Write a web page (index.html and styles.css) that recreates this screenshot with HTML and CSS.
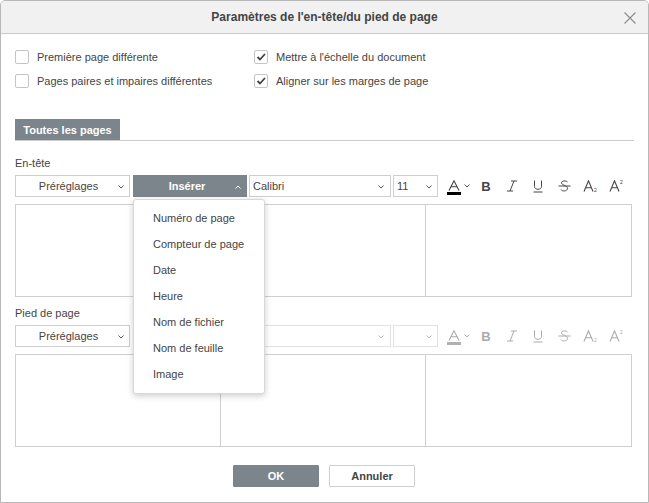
FILE: index.html
```html
<!DOCTYPE html>
<html lang="fr">
<head>
<meta charset="utf-8">
<title>Paramètres de l'en-tête/du pied de page</title>
<link rel="stylesheet" href="styles.css">
</head>
<body>
<div class="dialog">
  <div class="header">
    <span class="title">Paramètres de l'en-tête/du pied de page</span>
    <span class="close"><svg width="12" height="12" viewBox="0 0 12 12"><path d="M0.5 0.5 L11.5 11.5 M11.5 0.5 L0.5 11.5" stroke="#8c8c8c" stroke-width="1.1" fill="none"/></svg></span>
  </div>
  <div class="body">
    <div class="options">
      <label class="opt"><span class="cb"></span>Première page différente</label>
      <label class="opt"><span class="cb checked"><svg width="12" height="12" viewBox="0 0 12 12"><path d="M2.5 6 L5 8.5 L10 3" stroke="#444" stroke-width="1.8" fill="none"/></svg></span>Mettre à l'échelle du document</label>
      <label class="opt"><span class="cb"></span>Pages paires et impaires différentes</label>
      <label class="opt"><span class="cb checked"><svg width="12" height="12" viewBox="0 0 12 12"><path d="M2.5 6 L5 8.5 L10 3" stroke="#444" stroke-width="1.8" fill="none"/></svg></span>Aligner sur les marges de page</label>
    </div>

    <div class="tabs"><span class="tab">Toutes les pages</span></div>

    <div class="section-label">En-tête</div>
    <div class="toolbar">
      <div class="combo presets"><span class="ctext">Préréglages</span><svg class="caret" width="6" height="4" viewBox="0 0 6 4"><path d="M0.5 0.5 L3 3 L5.5 0.5" stroke="#555" fill="none"/></svg></div>
      <div class="insert-wrap">
        <div class="combo insert"><span class="ctext">Insérer</span><svg class="caret" width="6" height="4" viewBox="0 0 6 4"><path d="M0.5 3.5 L3 1 L5.5 3.5" stroke="#fff" fill="none"/></svg></div>
        <ul class="menu">
          <li>Numéro de page</li>
          <li>Compteur de page</li>
          <li>Date</li>
          <li>Heure</li>
          <li>Nom de fichier</li>
          <li>Nom de feuille</li>
          <li>Image</li>
        </ul>
      </div>
      <div class="combo font"><span class="ctext left">Calibri</span><svg class="caret" width="6" height="4" viewBox="0 0 6 4"><path d="M0.5 0.5 L3 3 L5.5 0.5" stroke="#555" fill="none"/></svg></div>
      <div class="combo size"><span class="ctext left">11</span><svg class="caret" width="6" height="4" viewBox="0 0 6 4"><path d="M0.5 0.5 L3 3 L5.5 0.5" stroke="#555" fill="none"/></svg></div>
      <div class="icons">
        <div class="ib fcolor">
          <span class="fa"><svg width="12" height="11" viewBox="0 0 12 11"><path d="M1 10.5 L6 0.8 L11 10.5 M3 6.8 H9" stroke="#444" stroke-width="1.1" fill="none"/></svg><span class="bar"></span></span>
          <svg class="caret" width="6" height="4" viewBox="0 0 6 4"><path d="M0.5 0.5 L3 3 L5.5 0.5" stroke="#555" fill="none"/></svg>
        </div>
        <div class="ib"><span class="bold">B</span></div>
        <div class="ib"><svg width="12" height="12" viewBox="0 0 12 12"><path d="M5 1 H11 M1 11 H7 M8 1 L4 11" stroke="#444" stroke-width="1" fill="none"/></svg></div>
        <div class="ib"><svg width="12" height="13" viewBox="0 0 12 13"><path d="M2.5 0.5 V6.5 C2.5 10.2 9.5 10.2 9.5 6.5 V0.5 M1.5 12 H10.5" stroke="#444" stroke-width="1" fill="none"/></svg></div>
        <div class="ib"><svg width="13" height="12" viewBox="0 0 13 12"><path d="M9.5 2 C8.5 0.5 3.5 0.4 3.5 3 C3.5 5 9.5 5.4 9.5 8.3 C9.5 11.5 4 11.6 3 9.6 M0.5 6 H12.5" stroke="#444" stroke-width="1" fill="none"/></svg></div>
        <div class="ib"><svg width="15" height="12" viewBox="0 0 15 12"><path d="M1 11.5 L5.5 0.8 L10 11.5 M2.7 7.8 H8.3" stroke="#444" stroke-width="1.1" fill="none"/><text x="11" y="11.5" font-size="5" font-family="Liberation Sans, Arial, sans-serif" fill="#444">2</text></svg></div>
        <div class="ib"><svg width="15" height="12" viewBox="0 0 15 12"><path d="M1 11.5 L5.5 0.8 L10 11.5 M2.7 7.8 H8.3" stroke="#444" stroke-width="1.1" fill="none"/><text x="11" y="4" font-size="5" font-family="Liberation Sans, Arial, sans-serif" fill="#444">2</text></svg></div>
      </div>
    </div>
    <div class="editor"><div class="pane"></div><div class="pane"></div><div class="pane"></div></div>

    <div class="section-label second">Pied de page</div>
    <div class="toolbar">
      <div class="combo presets"><span class="ctext">Préréglages</span><svg class="caret" width="6" height="4" viewBox="0 0 6 4"><path d="M0.5 0.5 L3 3 L5.5 0.5" stroke="#555" fill="none"/></svg></div>
      <div class="insert-wrap">
        <div class="combo insert"><span class="ctext">Insérer</span><svg class="caret" width="6" height="4" viewBox="0 0 6 4"><path d="M0.5 0.5 L3 3 L5.5 0.5" stroke="#fff" fill="none"/></svg></div>
      </div>
      <div class="combo font disabled"><span class="ctext left"></span><svg class="caret" width="6" height="4" viewBox="0 0 6 4"><path d="M0.5 0.5 L3 3 L5.5 0.5" stroke="#bbb" fill="none"/></svg></div>
      <div class="combo size disabled"><span class="ctext left"></span><svg class="caret" width="6" height="4" viewBox="0 0 6 4"><path d="M0.5 0.5 L3 3 L5.5 0.5" stroke="#bbb" fill="none"/></svg></div>
      <div class="icons dim">
        <div class="ib fcolor">
          <span class="fa"><svg width="12" height="11" viewBox="0 0 12 11"><path d="M1 10.5 L6 0.8 L11 10.5 M3 6.8 H9" stroke="#444" stroke-width="1.1" fill="none"/></svg><span class="bar gray"></span></span>
          <svg class="caret" width="6" height="4" viewBox="0 0 6 4"><path d="M0.5 0.5 L3 3 L5.5 0.5" stroke="#555" fill="none"/></svg>
        </div>
        <div class="ib"><span class="bold">B</span></div>
        <div class="ib"><svg width="12" height="12" viewBox="0 0 12 12"><path d="M5 1 H11 M1 11 H7 M8 1 L4 11" stroke="#444" stroke-width="1" fill="none"/></svg></div>
        <div class="ib"><svg width="12" height="13" viewBox="0 0 12 13"><path d="M2.5 0.5 V6.5 C2.5 10.2 9.5 10.2 9.5 6.5 V0.5 M1.5 12 H10.5" stroke="#444" stroke-width="1" fill="none"/></svg></div>
        <div class="ib"><svg width="13" height="12" viewBox="0 0 13 12"><path d="M9.5 2 C8.5 0.5 3.5 0.4 3.5 3 C3.5 5 9.5 5.4 9.5 8.3 C9.5 11.5 4 11.6 3 9.6 M0.5 6 H12.5" stroke="#444" stroke-width="1" fill="none"/></svg></div>
        <div class="ib"><svg width="15" height="12" viewBox="0 0 15 12"><path d="M1 11.5 L5.5 0.8 L10 11.5 M2.7 7.8 H8.3" stroke="#444" stroke-width="1.1" fill="none"/><text x="11" y="11.5" font-size="5" font-family="Liberation Sans, Arial, sans-serif" fill="#444">2</text></svg></div>
        <div class="ib"><svg width="15" height="12" viewBox="0 0 15 12"><path d="M1 11.5 L5.5 0.8 L10 11.5 M2.7 7.8 H8.3" stroke="#444" stroke-width="1.1" fill="none"/><text x="11" y="4" font-size="5" font-family="Liberation Sans, Arial, sans-serif" fill="#444">2</text></svg></div>
      </div>
    </div>
    <div class="editor"><div class="pane"></div><div class="pane"></div><div class="pane"></div></div>
  </div>
  <div class="footer">
    <button class="btn primary">OK</button>
    <button class="btn">Annuler</button>
  </div>
</div>
</body>
</html>
```

FILE: styles.css
```css
* { box-sizing: border-box; }
html, body { margin: 0; padding: 0; background: #fff; }
body {
  font-family: "Liberation Sans", Arial, sans-serif;
  font-size: 11px;
  color: #444;
}
.dialog {
  width: 649px;
  height: 503px;
  border: 1px solid #b8b8b8;
  border-radius: 5px 5px 0 0;
  background: #fff;
  position: relative;
  overflow: hidden;
}
.header {
  height: 33px;
  background: #f1f1f1;
  border-bottom: 1px solid #cbcbcb;
  display: flex;
  align-items: center;
  justify-content: center;
  position: relative;
}
.title {
  font-weight: bold;
  font-size: 12px;
  color: #444;
}
.close {
  position: absolute;
  right: 12px;
  top: 11px;
  width: 12px;
  height: 12px;
  display: flex;
}
.body {
  padding: 16px 14px 0 14px;
}
.options {
  display: grid;
  grid-template-columns: 239px 1fr;
  row-gap: 10px;
}
.opt {
  display: flex;
  align-items: center;
  height: 14px;
  line-height: 14px;
}
.cb {
  width: 14px;
  height: 14px;
  border: 1px solid #c4c4c4;
  border-radius: 2px;
  margin-right: 8px;
  background: #fff;
  display: flex;
  align-items: center;
  justify-content: center;
  flex: none;
}
.tabs {
  margin-top: 31px;
  border-bottom: 1px solid #cbcbcb;
  display: flex;
}
.tab {
  width: 105px;
  height: 21px;
  background: #7d858c;
  color: #fff;
  font-weight: bold;
  display: flex;
  align-items: center;
  justify-content: center;
}
.section-label {
  margin-top: 14px;
  height: 16px;
  line-height: 16px;
  margin-bottom: 4px;
}
.section-label.second { margin-top: 8px; }
.toolbar {
  display: flex;
  height: 22px;
  align-items: stretch;
}
.combo {
  height: 22px;
  border: 1px solid #cfcfcf;
  background: #fff;
  display: flex;
  align-items: center;
  position: relative;
}
.combo .caret {
  position: absolute;
  right: 5px;
  top: 9px;
}
.ctext {
  flex: 1;
  text-align: center;
  padding-right: 8px;
}
.ctext.left { text-align: left; padding-left: 3px; }
.presets { width: 115px; }
.insert-wrap {
  position: relative;
  margin-left: 3px;
  width: 114px;
}
.insert {
  width: 114px;
  background: #7d858c;
  border-color: #7d858c;
  color: #fff;
  font-weight: bold;
}
.insert .ctext { padding-left: 8px; padding-right: 14px; }
.font { width: 142px; margin-left: 2px; }
.size { width: 45px; margin-left: 2px; }
.size .caret { right: 5px; }
.font .caret { right: 6px; }
.combo.disabled { border-color: #e2e2e2; }
.icons {
  display: flex;
  align-items: center;
  margin-left: 5px;
}
.icons.dim { opacity: 0.45; }
.ib {
  width: 26px;
  height: 22px;
  display: flex;
  align-items: center;
  justify-content: center;
}
.ib.fcolor {
  width: 30px;
  justify-content: flex-start;
  padding-left: 4px;
  gap: 3px;
}
.fa {
  display: flex;
  flex-direction: column;
  align-items: center;
  width: 14px;
  padding-top: 2px;
}
.bar {
  width: 14px;
  height: 3px;
  background: #000;
  margin-top: 1px;
}
.bar.gray { background: #555; }
.bold {
  font-weight: bold;
  font-size: 13px;
  color: #444;
}
.editor {
  margin-top: 7px;
  margin-right: 2px;
  height: 93px;
  border: 1px solid #cfcfcf;
  display: grid;
  grid-template-columns: 204px 205px 1fr;
}
.pane { border-left: 1px solid #cfcfcf; }
.pane:first-child { border-left: none; }
.menu {
  position: absolute;
  left: 0;
  top: 24px;
  width: 132px;
  margin: 0;
  padding: 5px 0 6px 0;
  list-style: none;
  background: #fff;
  border: 1px solid #d8d8d8;
  border-radius: 3px;
  box-shadow: 0 2px 6px rgba(0,0,0,0.2);
  z-index: 5;
}
.menu li {
  height: 26px;
  line-height: 26px;
  padding-left: 19px;
  color: #444;
}
.footer {
  display: flex;
  justify-content: center;
  gap: 10px;
  padding-top: 18px;
  padding-right: 1px;
}
.btn {
  width: 86px;
  height: 22px;
  font-family: "Liberation Sans", Arial, sans-serif;
  font-size: 11px;
  font-weight: bold;
  color: #444;
  background: #fff;
  border: 1px solid #cfcfcf;
  border-radius: 1px;
  padding: 0;
}
.btn.primary {
  background: #7d858c;
  border-color: #7d858c;
  color: #fff;
}
```
